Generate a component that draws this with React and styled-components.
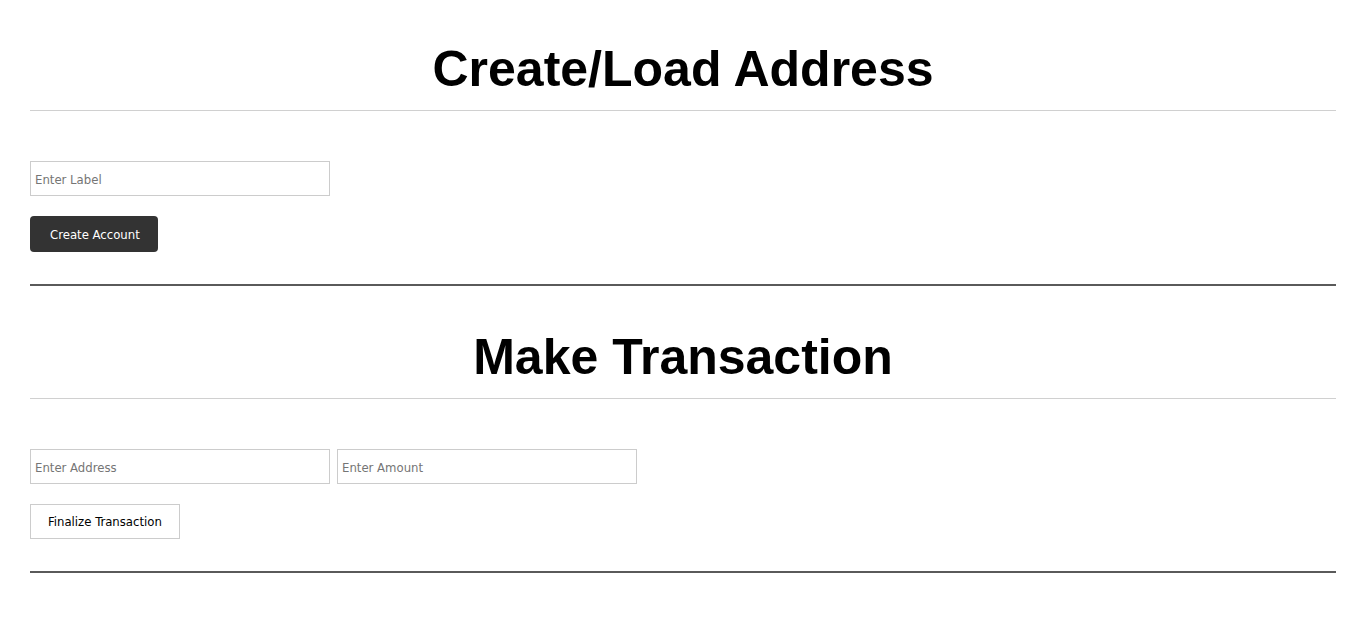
import React from 'react';
import styled, { createGlobalStyle } from 'styled-components';

const GlobalStyle = createGlobalStyle`
    body {
        margin: 0;
        background: #fff;
        font-family: "DejaVu Sans Condensed", "Liberation Sans", sans-serif;
    }
`;

const Page = styled.div`
    padding: 0 29px 0 30px;
`;

const Section = styled.section`
    display: flex;
    flex-direction: column;
    border-bottom: 2px solid #5a5a5a;
    padding-bottom: 32px;
    & + & h1 {
        margin-top: 42px;
    }
`;

const Title = styled.h1`
    margin: 40px 0 0;
    padding-bottom: 12px;
    border-bottom: 1px solid #d0d0d0;
    font-family: "Liberation Sans", Arial, sans-serif;
    font-size: 50px;
    line-height: 58px;
    font-weight: bold;
    color: #000;
    text-align: center;
`;

const Row = styled.div`
    display: flex;
    gap: 7px;
    margin-top: 50px;
`;

const Input = styled.input`
    box-sizing: border-box;
    width: 300px;
    height: 35px;
    padding: 2px 4px 0;
    border: 1px solid #cccccc;
    font-family: inherit;
    font-size: 13px;
    color: #333;
    outline: none;
    &::placeholder {
        color: #757575;
    }
`;

const Button = styled.button`
    align-self: flex-start;
    box-sizing: border-box;
    margin-top: 20px;
    height: ${props => props.$dark ? '36px' : '35px'};
    padding: ${props => props.$dark ? '0 18px 0 20px' : '0 17px'};
    border: ${props => props.$dark ? 'none' : '1px solid #cccccc'};
    border-radius: ${props => props.$dark ? '4px' : '0'};
    background: ${props => props.$dark ? '#333333' : '#ffffff'};
    color: ${props => props.$dark ? '#ffffff' : '#000000'};
    font-family: inherit;
    font-size: 13px;
    cursor: pointer;
`;

export default function App() {
    return (
        <>
            <GlobalStyle />
            <Page>
                <Section>
                    <Title>Create/Load Address</Title>
                    <Row>
                        <Input placeholder="Enter Label" />
                    </Row>
                    <Button $dark>Create Account</Button>
                </Section>
                <Section>
                    <Title>Make Transaction</Title>
                    <Row>
                        <Input placeholder="Enter Address" />
                        <Input placeholder="Enter Amount" />
                    </Row>
                    <Button>Finalize Transaction</Button>
                </Section>
            </Page>
        </>
    );
}
